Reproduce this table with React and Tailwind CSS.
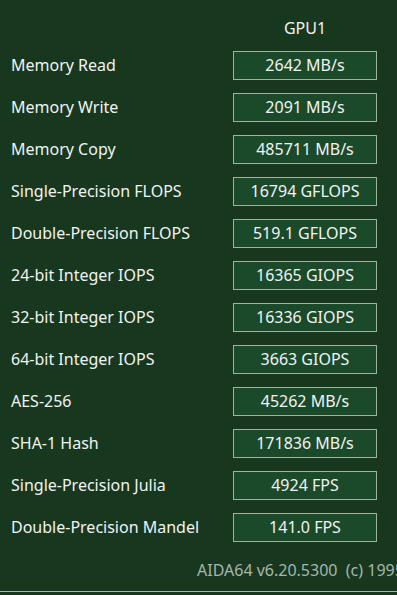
const rows = [
  ['Memory Read', '2642 MB/s'],
  ['Memory Write', '2091 MB/s'],
  ['Memory Copy', '485711 MB/s'],
  ['Single-Precision FLOPS', '16794 GFLOPS'],
  ['Double-Precision FLOPS', '519.1 GFLOPS'],
  ['24-bit Integer IOPS', '16365 GIOPS'],
  ['32-bit Integer IOPS', '16336 GIOPS'],
  ['64-bit Integer IOPS', '3663 GIOPS'],
  ['AES-256', '45262 MB/s'],
  ['SHA-1 Hash', '171836 MB/s'],
  ['Single-Precision Julia', '4924 FPS'],
  ['Double-Precision Mandel', '141.0 FPS'],
]

export default function App() {
  return (
    <div className="w-[397px] h-[595px] overflow-hidden bg-[#17381e] text-[#f2f2f2] font-['Noto_Sans',sans-serif] text-[16px]">
      <div className="h-[44px] flex items-end pb-[6px]">
        <div className="ml-[233px] w-[144px] text-center leading-[20px]">GPU1</div>
      </div>
      {rows.map(([label, value]) => (
        <div key={label} className="h-[42px] flex items-center pl-[11px] pr-[20px]">
          <div className="flex-1 leading-[20px]">{label}</div>
          <div className="w-[144px] h-[29px] border border-[#9fb3a0] bg-[#1a4a2a] flex items-center justify-center leading-[20px]">
            {value}
          </div>
        </div>
      ))}
      <div className="h-[43px] flex items-center pl-[197px] whitespace-nowrap overflow-hidden text-[#a7b5ad]">
        AIDA64 v6.20.5300&nbsp;&nbsp;(c) 1995-2020 FinalWire Ltd.
      </div>
      <div className="h-px bg-[#a8b4aa]" />
    </div>
  )
}
